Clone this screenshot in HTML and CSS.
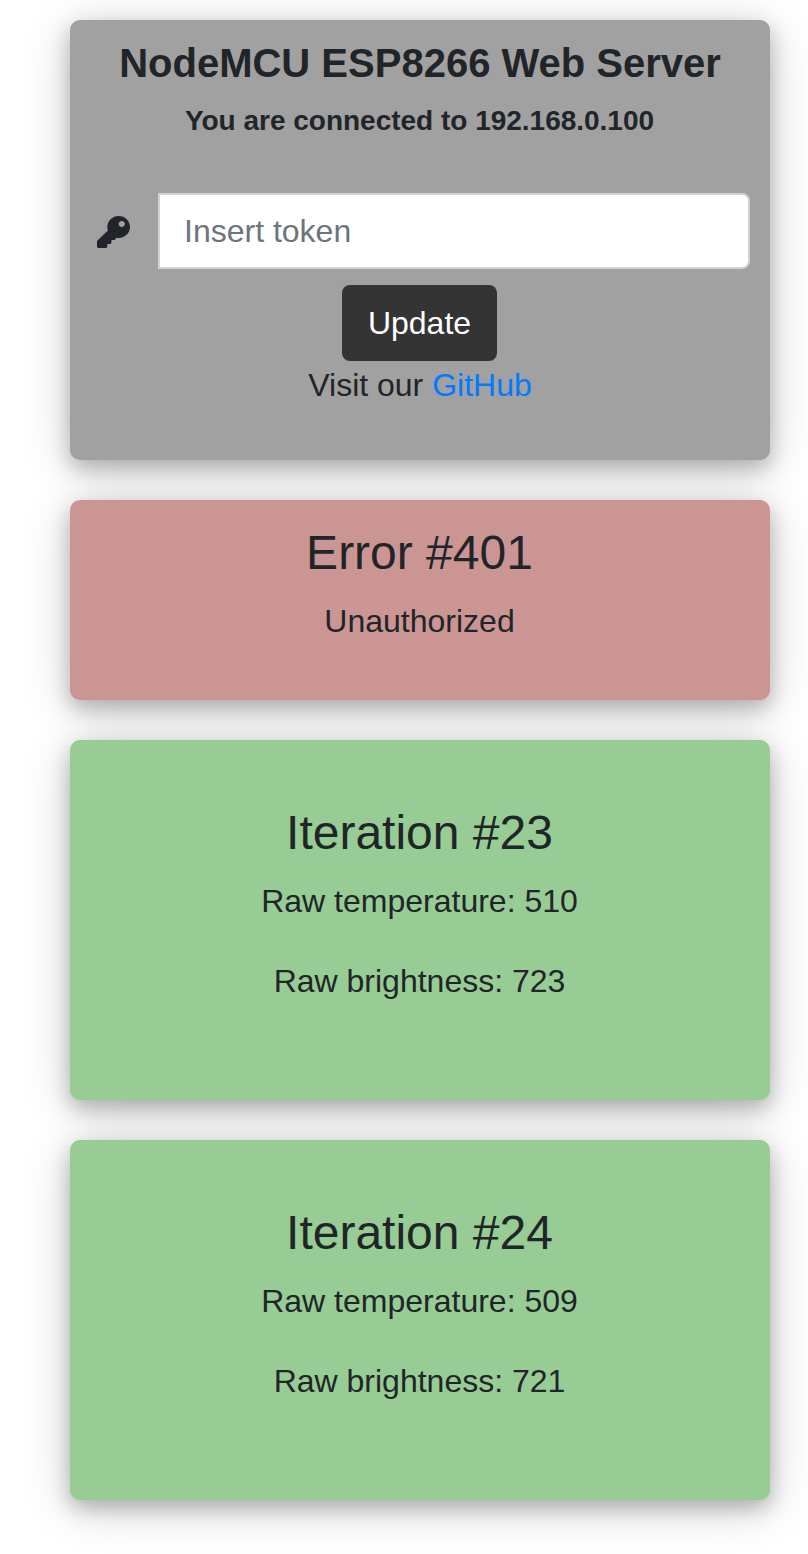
FILE: index.html
```html
<!DOCTYPE html>
<html lang="en">
<head>
<meta charset="utf-8">
<title>NodeMCU ESP8266 Web Server</title>
<link rel="stylesheet" href="styles.css">
</head>
<body>
<main class="cards">
  <section class="card card-main">
    <h1 class="title">NodeMCU ESP8266 Web Server</h1>
    <h2 class="subtitle">You are connected to 192.168.0.100</h2>
    <form class="token-form">
      <div class="input-group">
        <label class="key" for="token">
          <svg class="key-icon" viewBox="0 0 512 512" preserveAspectRatio="none" aria-hidden="true"><path d="M512 176.001C512 273.203 433.202 352 336 352c-11.22 0-22.19-1.062-32.827-3.069l-24.012 27.014A23.999 23.999 0 0 1 261.223 384H224v40c0 13.255-10.745 24-24 24h-40v40c0 13.255-10.745 24-24 24H24c-13.255 0-24-10.745-24-24v-78.059c0-6.365 2.529-12.47 7.029-16.971l161.802-161.802C163.108 213.814 160 195.271 160 176 160 78.798 238.797.001 335.999 0 433.488-.001 512 78.511 512 176.001zM336 128c0 26.51 21.49 48 48 48s48-21.49 48-48-21.49-48-48-48-48 21.49-48 48z"/></svg>
        </label>
        <input class="token" id="token" type="text" placeholder="Insert token">
      </div>
      <button class="update" type="button">Update</button>
    </form>
    <p class="text">Visit our <a class="link" href="#">GitHub</a></p>
  </section>
  <section class="card card-error">
    <h3 class="heading">Error #401</h3>
    <p class="text">Unauthorized</p>
  </section>
  <section class="card card-data">
    <h3 class="heading">Iteration #23</h3>
    <p class="text">Raw temperature: 510</p>
    <p class="text">Raw brightness: 723</p>
  </section>
  <section class="card card-data">
    <h3 class="heading">Iteration #24</h3>
    <p class="text">Raw temperature: 509</p>
    <p class="text">Raw brightness: 721</p>
  </section>
</main>
</body>
</html>
```

FILE: styles.css
```css
* { box-sizing: border-box; }
body {
  margin: 0;
  min-height: 100vh;
  padding: 20px 0 54px 70px;
  background: #fff;
  color: #212529;
  font: 32px/48px "Liberation Sans", Arial, sans-serif;
  overflow: hidden;
}
.cards {
  display: flex;
  flex-direction: column;
  gap: 40px;
  width: 700px;
}
.card {
  padding-right: 1px;
  border-radius: 10px;
  text-align: center;
  box-shadow: 0 8px 20px rgba(0, 0, 0, .23), 0 8px 48px rgba(0, 0, 0, .19);
}
.card-main { height: 440px; padding: 19px 20px 20px; background: #a1a1a1; }
.card-error { height: 200px; padding-top: 24px; background: #cb9594; }
.card-data { height: 360px; padding-top: 64px; background: #98cc95; }
.title { margin: 0; font-size: 40px; line-height: 48px; white-space: nowrap; }
.subtitle { margin: 17px 1px 0 0; font-size: 28px; line-height: 34px; letter-spacing: -.01px; }
.token-form { margin-top: 55px; }
.input-group { display: flex; height: 76px; margin-bottom: 16px; }
.key { display: flex; align-items: center; width: 68px; flex: none; padding: 2px 0 0 7px; }
.key-icon { width: 33px; height: 32px; fill: #212529; }
.token {
  flex: 1;
  min-width: 0;
  height: 76px;
  padding: 12px 24px;
  border: 2px solid #ced4da;
  border-radius: 0 8px 8px 0;
  background: #fff;
  font: inherit;
}
.token::placeholder { color: #6c757d; opacity: 1; }
.update {
  display: block;
  width: 155px;
  height: 76px;
  margin: 0 0 0 252px;
  padding: 0;
  border: 0;
  border-radius: 8px;
  background: #343434;
  color: #fff;
  font: inherit;
}
.heading { margin: 0 0 15px; font-size: 48px; font-weight: 400; line-height: 58px; }
.text { margin: 0 0 32px; }
.link { color: #007bff; text-decoration: none; }
```
